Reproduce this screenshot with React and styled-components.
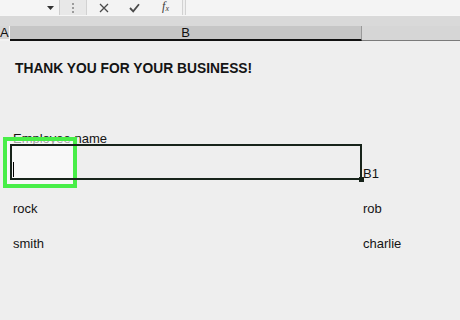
import React from 'react';
import styled, { createGlobalStyle } from 'styled-components';

const Global = createGlobalStyle`
  html, body { margin: 0; padding: 0; background: #eeeeee; }
  body { font-family: "Liberation Sans", Arial, sans-serif; }
`;

const Page = styled.div`
  position: relative;
  width: 460px;
  height: 320px;
  overflow: hidden;
  background: #eeeeee;
  display: flex;
  flex-direction: column;
`;

const Toolbar = styled.div`
  display: flex;
  height: 16px;
  background: #efefef;
  border-bottom: 1px solid #f6f6f6;
`;

const NameBox = styled.div`
  width: 60px;
  box-sizing: border-box;
  background: #f5f5f5;
  border-right: 1px solid #cfcfcf;
  display: flex;
  align-items: center;
  justify-content: flex-end;
  padding-right: 5px;
`;

const Grip = styled.div`
  width: 26px;
  display: flex;
  flex-direction: column;
  align-items: center;
  justify-content: center;
  gap: 2px;
  background: #e8e8e8;
`;

const Dot = styled.span`
  width: 2px;
  height: 2px;
  background: #9c9c9c;
`;

const FxButtons = styled.div`
  width: 97px;
  box-sizing: border-box;
  display: grid;
  grid-template-columns: repeat(3, 31px);
  padding-left: 1px;
  background: #f3f3f3;
  border-left: 1px solid #d2d2d2;
  border-right: 1px solid #d2d2d2;
`;

const ToolButton = styled.div`
  display: flex;
  align-items: center;
  justify-content: center;
  color: #454545;
`;

const FxText = styled.span`
  font-family: "Liberation Serif", "Times New Roman", serif;
  font-style: italic;
  font-size: 12px;
  line-height: 12px;
  color: #3a3a3a;
  sub {
    font-size: 8px;
    vertical-align: -1px;
  }
`;

const FormulaInput = styled.div`
  flex: 1;
  margin-left: 2px;
  background: #f4f4f4;
  border-left: 1px solid #d2d2d2;
`;

const Headers = styled.div`
  display: grid;
  grid-template-columns: 10px 352px 1fr;
  padding-top: 10px;
  background: #d9d9d9;
`;

const ColHead = styled.div`
  height: 15px;
  box-sizing: border-box;
  display: flex;
  align-items: center;
  justify-content: ${p => (p.$clip ? 'flex-start' : 'center')};
  font-size: 13px;
  line-height: 13px;
  color: #111;
  background: ${p => (p.$selected ? '#c6c6c6' : '#d6d6d6')};
  border-bottom: ${p => (p.$selected ? '2px solid #111' : p.$clip ? '2px solid #f2f2f2' : '1px solid #7a7a7a')};
  border-right: ${p => (p.$selected ? '1px solid #999' : p.$clip ? '1px solid #f4f4f4' : 'none')};
`;

const Sheet = styled.div`
  flex: 1;
  display: grid;
  grid-template-columns: 10px 351px 1fr;
  grid-auto-rows: 35px;
`;

const Cell = styled.div`
  position: relative;
  display: flex;
  align-items: flex-end;
  box-sizing: border-box;
  padding: 0 0 0 ${p => p.$pad ?? 3}px;
  font-size: ${p => (p.$bold ? '13.8px' : '13px')};
  line-height: 15px;
  font-weight: ${p => (p.$bold ? 700 : 400)};
  color: #141414;
  white-space: nowrap;
`;

const ActiveCell = styled(Cell)`
  &::after {
    content: '';
    position: absolute;
    top: -2px;
    left: 0;
    right: -1px;
    bottom: 1px;
    border: 2px solid #17231a;
    z-index: 2;
  }
`;

const FillHandle = styled.span`
  position: absolute;
  right: -3px;
  bottom: -1px;
  width: 5px;
  height: 5px;
  background: #17231a;
  z-index: 3;
`;

const TextCaret = styled.span`
  position: relative;
  z-index: 3;
  width: 1px;
  height: 15px;
  margin-bottom: 4px;
  background: #000;
`;

const Highlight = styled.div`
  position: absolute;
  left: 3px;
  top: 137px;
  width: 74px;
  height: 51px;
  box-sizing: border-box;
  border: 4px solid #48ee48;
  background: rgba(255, 255, 255, 0.6);
  z-index: 1;
`;

const DownCaret = () => (
  <svg width="7" height="4" viewBox="0 0 7 4">
    <path d="M0 0 H7 L3.5 4 Z" fill="#333" />
  </svg>
);

const CrossIcon = () => (
  <svg width="10" height="10" viewBox="0 0 10 10">
    <path d="M1 1 L9 9 M9 1 L1 9" stroke="#4a4a4a" strokeWidth="1.3" fill="none" />
  </svg>
);

const CheckIcon = () => (
  <svg width="11" height="10" viewBox="0 0 11 10">
    <path d="M1 5 L4.2 8.3 L10 1.2" stroke="#4a4a4a" strokeWidth="1.8" fill="none" />
  </svg>
);

const rows = [
  { b: 'THANK YOU FOR YOUR BUSINESS!', bold: true },
  {},
  { b: 'Employee name' },
  { active: true, c: 'B1' },
  { b: 'rock', c: 'rob' },
  { b: 'smith', c: 'charlie' },
  {},
  {},
];

export default function App() {
  return (
    <>
      <Global />
      <Page>
        <Toolbar>
          <NameBox>
            <DownCaret />
          </NameBox>
          <Grip>
            <Dot />
            <Dot />
            <Dot />
          </Grip>
          <FxButtons>
            <ToolButton>
              <CrossIcon />
            </ToolButton>
            <ToolButton>
              <CheckIcon />
            </ToolButton>
            <ToolButton>
              <FxText>
                f<sub>x</sub>
              </FxText>
            </ToolButton>
          </FxButtons>
          <FormulaInput />
        </Toolbar>
        <Headers>
          <ColHead $clip>A</ColHead>
          <ColHead $selected>B</ColHead>
          <ColHead />
        </Headers>
        <Sheet>
          {rows.map((r, i) => (
            <React.Fragment key={i}>
              <Cell />
              {r.active ? (
                <ActiveCell>
                  <TextCaret />
                  <FillHandle />
                </ActiveCell>
              ) : (
                <Cell $bold={r.bold} $pad={r.bold ? 5 : 3}>
                  {r.b}
                </Cell>
              )}
              <Cell $pad={2}>{r.c}</Cell>
            </React.Fragment>
          ))}
        </Sheet>
        <Highlight />
      </Page>
    </>
  );
}
